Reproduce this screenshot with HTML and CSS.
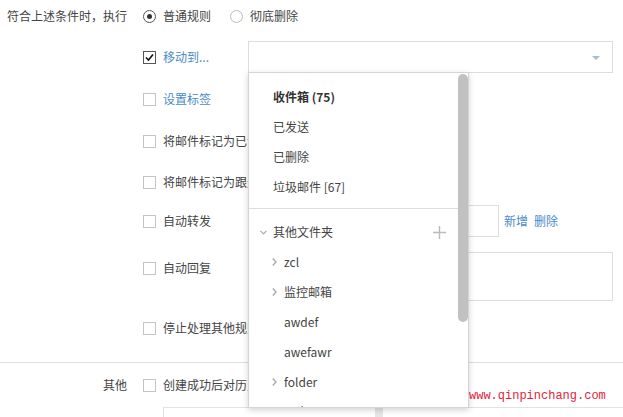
FILE: index.html
```html
<!DOCTYPE html>
<html lang="zh">
<head>
<meta charset="utf-8">
<title>规则</title>
<link rel="stylesheet" href="styles.css">
</head>
<body>
<div class="page">
  <div class="row row-a">
    <div class="label">符合上述条件时，执行</div>
    <div class="radios">
      <span class="radio on"></span><span class="txt">普通规则</span>
      <span class="radio second"></span><span class="txt">彻底删除</span>
    </div>
  </div>

  <div class="row row-b">
    <div class="label"></div>
    <div class="opt"><span class="cb on"><svg width="11" height="11" viewBox="0 0 11 11"><polyline points="2,5.5 4.5,8 9,2.5" fill="none" stroke="#111" stroke-width="1.6"/></svg></span><span class="link">移动到...</span></div>
    <div class="select"><span class="arrow"></span></div>
  </div>

  <div class="row row-c">
    <div class="label"></div>
    <div class="opt"><span class="cb"></span><span class="link">设置标签</span></div>
  </div>

  <div class="row row-d">
    <div class="label"></div>
    <div class="opt"><span class="cb"></span><span class="txt">将邮件标记为已读</span></div>
  </div>

  <div class="row row-e">
    <div class="label"></div>
    <div class="opt"><span class="cb"></span><span class="txt">将邮件标记为跟进</span></div>
  </div>

  <div class="row row-f">
    <div class="label"></div>
    <div class="opt"><span class="cb"></span><span class="txt">自动转发</span></div>
    <div class="input"></div>
    <span class="link add">新增</span><span class="link del">删除</span>
  </div>

  <div class="row row-g">
    <div class="label"></div>
    <div class="opt"><span class="cb"></span><span class="txt">自动回复</span></div>
    <div class="textarea"></div>
  </div>

  <div class="row row-h">
    <div class="label"></div>
    <div class="opt"><span class="cb"></span><span class="txt">停止处理其他规则</span></div>
  </div>

  <div class="divider"></div>

  <div class="row row-i">
    <div class="label">其他</div>
    <div class="opt"><span class="cb"></span><span class="txt">创建成功后对历史邮件应用</span></div>
  </div>

  <div class="bottom-box"><span class="bottom-bar"></span></div>

  <div class="watermark">www.qinpinchang.com</div>

  <div class="menu">
    <div class="menu-list">
      <div class="item bold">收件箱 (75)</div>
      <div class="item">已发送</div>
      <div class="item">已删除</div>
      <div class="item">垃圾邮件 [67]</div>
      <div class="sep"></div>
      <div class="item group">
        <svg class="chev-down" width="7" height="5" viewBox="0 0 7 5"><polyline points="0.5,0.8 3.5,3.8 6.5,0.8" fill="none" stroke="#aaa" stroke-width="1.2"/></svg>
        <span>其他文件夹</span>
        <svg class="plus" width="13" height="13" viewBox="0 0 13 13"><path d="M6.5 0v13M0 6.5h13" stroke="#bbb" stroke-width="1.4"/></svg>
      </div>
      <div class="item sub"><svg class="chev-right" width="5" height="8" viewBox="0 0 5 8"><polyline points="0.8,0.5 4,4 0.8,7.5" fill="none" stroke="#aaa" stroke-width="1.4"/></svg><span>zcl</span></div>
      <div class="item sub"><svg class="chev-right" width="5" height="8" viewBox="0 0 5 8"><polyline points="0.8,0.5 4,4 0.8,7.5" fill="none" stroke="#aaa" stroke-width="1.4"/></svg><span>监控邮箱</span></div>
      <div class="item leaf">awdef</div>
      <div class="item leaf">awefawr</div>
      <div class="item sub"><svg class="chev-right" width="5" height="8" viewBox="0 0 5 8"><polyline points="0.8,0.5 4,4 0.8,7.5" fill="none" stroke="#aaa" stroke-width="1.4"/></svg><span>folder</span></div>
      <div class="item leaf">同步</div>
    </div>
    <div class="thumb"></div>
  </div>
</div>
</body>
</html>
```

FILE: styles.css
```css
* { box-sizing: border-box; }
html, body { margin: 0; padding: 0; background: #fff; }
body {
  font-family: "Noto Sans CJK SC", "Noto Sans", sans-serif;
  font-size: 12px;
  color: #444;
  overflow: hidden;
}
.page {
  position: relative;
  width: 623px;
  height: 417px;
  overflow: hidden;
}
.row {
  display: flex;
  align-items: center;
  height: 32px;
  white-space: nowrap;
}
.label {
  width: 127px;
  flex: none;
  text-align: right;
  line-height: 16px;
}
.radios {
  display: flex;
  align-items: center;
  margin-left: 16px;
}
.radio {
  width: 13px;
  height: 13px;
  border: 1px solid #bbb;
  border-radius: 50%;
  margin-right: 7px;
  position: relative;
  flex: none;
}
.radio.on { border-color: #555; }
.radio.on::after {
  content: "";
  position: absolute;
  left: 3px; top: 3px;
  width: 5px; height: 5px;
  border-radius: 50%;
  background: #333;
}
.radio.second { margin-left: 19px; margin-right: 7px; }
.txt { line-height: 16px; }
.opt {
  width: 105px;
  flex: none;
  margin-left: 16px;
  display: flex;
  align-items: center;
  height: 32px;
}
.cb {
  width: 13px;
  height: 13px;
  border: 1px solid #c4c4c4;
  background: #fff;
  margin-right: 7px;
  flex: none;
  display: flex;
  align-items: center;
  justify-content: center;
}
.cb.on { border-color: #555; }
.link { color: #4a8bc6; line-height: 16px; }

.row-b { margin-top: 9px; }
.row-c { margin-top: 10px; }
.row-d { margin-top: 10px; }
.row-e { margin-top: 9px; }
.row-f { margin-top: 7px; }
.row-g { margin-top: 15px; height: 49px; align-items: flex-start; }
.row-h { margin-top: 11px; }
.row-i { margin-top: 6px; }

.select {
  width: 365px;
  height: 32px;
  border: 1px solid #ddd;
  position: relative;
}
.arrow {
  position: absolute;
  right: 12px;
  top: 14px;
  width: 0; height: 0;
  border-left: 4px solid transparent;
  border-right: 4px solid transparent;
  border-top: 4px solid #a9bcc9;
}
.input {
  width: 251px;
  height: 32px;
  border: 1px solid #ddd;
  flex: none;
}
.add { margin-left: 5px; }
.del { margin-left: 6px; }
.textarea {
  width: 365px;
  height: 49px;
  border: 1px solid #ddd;
  flex: none;
}
.divider {
  margin-top: 18px;
  height: 1px;
  background: #ddd;
}
.bottom-box {
  margin-top: 6px;
  margin-left: 163px;
  height: 30px;
  border-top: 1px solid #e2e2e2;
  border-left: 1px solid #e2e2e2;
  position: relative;
}
.bottom-bar {
  position: absolute;
  left: 211px;
  top: 0;
  width: 8px;
  height: 30px;
  background: #e6e6e6;
}
.watermark {
  position: absolute;
  left: 469px;
  top: 388px;
  font-family: "Liberation Mono", monospace;
  font-size: 12px;
  line-height: 16px;
  color: #e4223a;
}

.menu {
  position: absolute;
  left: 248px;
  top: 72px;
  width: 221px;
  height: 336px;
  border: 1px solid #d4d4d4;
  background: #fff;
  box-shadow: 0 2px 6px rgba(0,0,0,0.18);
  overflow: hidden;
}
.menu-list { padding-top: 9px; }
.item {
  height: 30px;
  line-height: 30px;
  padding-left: 24px;
  color: #444;
  display: flex;
  align-items: center;
}
.item.bold { font-weight: bold; color: #333; }
.sep {
  margin-top: 6px;
  margin-bottom: 8px;
  border-top: 1px solid #ddd;
}
.item.group { padding-left: 11px; padding-right: 22px; }
.chev-down { margin-right: 6px; flex: none; }
.plus { margin-left: auto; flex: none; }
.item.sub { padding-left: 23px; }
.chev-right { margin-right: 7px; flex: none; }
.item.leaf { padding-left: 35px; }
.thumb {
  position: absolute;
  right: 0;
  top: 1px;
  width: 10px;
  height: 248px;
  background: #c1c1c1;
  border-radius: 5px;
}
```
